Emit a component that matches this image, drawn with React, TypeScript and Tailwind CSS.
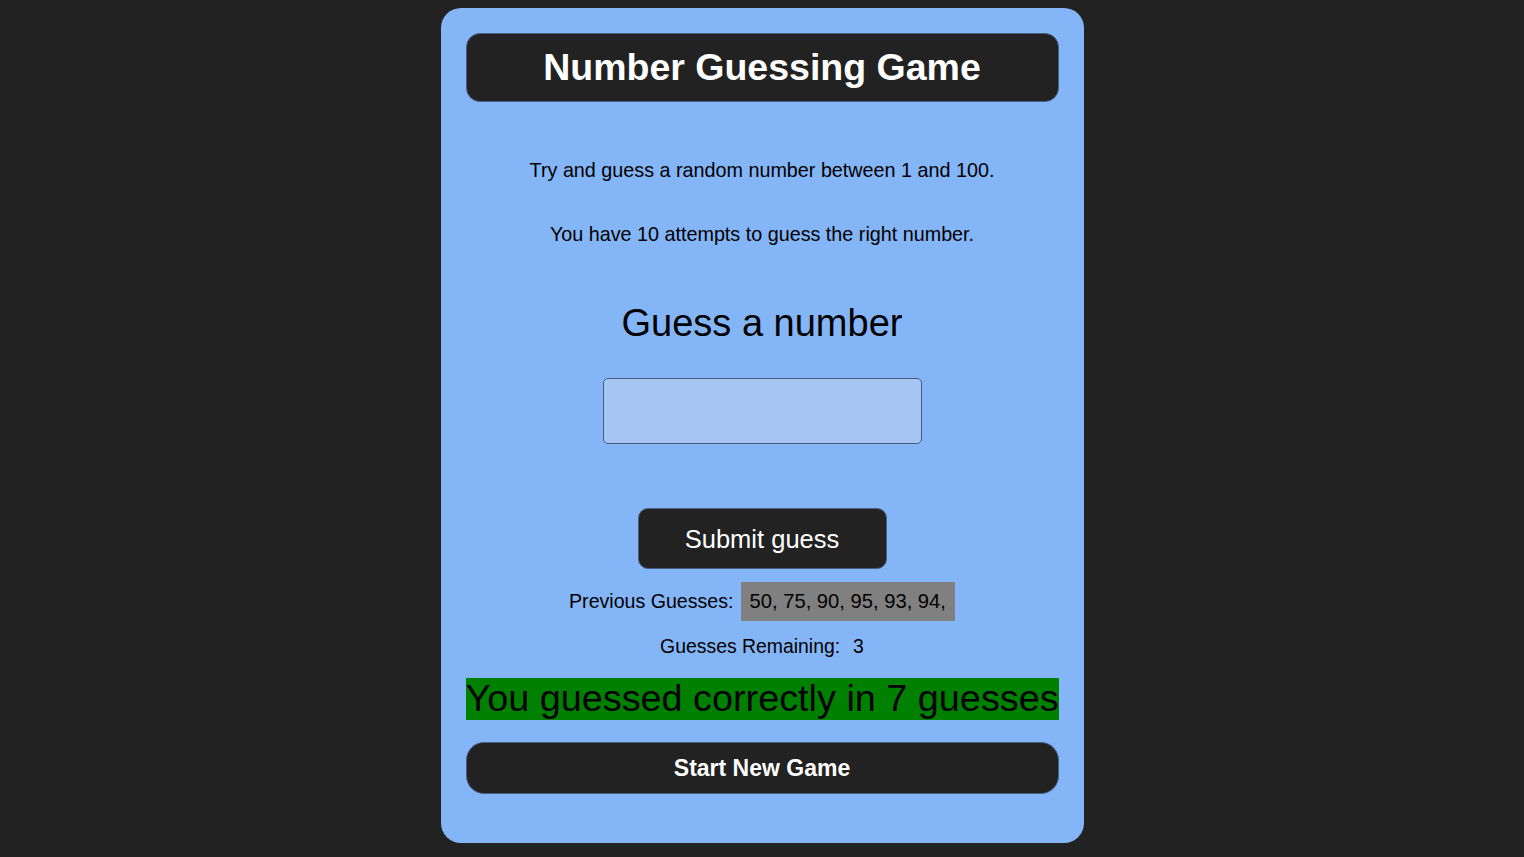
import React from 'react';

const guesses = [50, 75, 90, 95, 93, 94];

export default function App() {
  return (
    <div className="min-h-screen bg-[#222222] pt-[8px] font-['Liberation_Sans',Arial,sans-serif]">
      <div className="mx-auto w-[643px] rounded-[20px] bg-[#84b5f6] px-[25px] pt-[25px] pb-[49px] text-center text-black">
        {/* Header */}
        <div className="flex h-[69px] items-center justify-center rounded-[14px] bg-[#222222] border border-[#4a5f80]">
          <h1 className="text-[37.5px] font-bold text-white leading-none">Number Guessing Game</h1>
        </div>

        {/* Intro */}
        <p className="mt-[56px] h-[24px] text-[19.75px] leading-[24px]">
          Try and guess a random number between 1 and 100.
        </p>
        <p className="mt-[40px] h-[24px] text-[19.75px] leading-[24px]">
          You have 10 attempts to guess the right number.
        </p>

        {/* Guess input */}
        <h2 className="mt-[56px] h-[42px] text-[38px] leading-[42px]">Guess a number</h2>
        <div className="mt-[34px] flex justify-center">
          <input
            type="number"
            className="h-[66px] w-[319px] rounded-[5px] border border-[#4a5a78] bg-[#a5c6f3] outline-none"
          />
        </div>
        <div className="mt-[64px] flex justify-center">
          <button className="h-[61px] w-[249px] rounded-[10px] border border-[#4a5f80] bg-[#222222] pt-[2px] text-[25.5px] text-white">
            Submit guess
          </button>
        </div>

        {/* Results */}
        <div className="mt-[13px] flex h-[39px] items-center justify-center text-[19.6px]">
          <span className="mr-[7px]">Previous Guesses:</span>
          <span className="flex h-[39px] items-center bg-[#808080] px-[9px] text-[20.2px]">
            {guesses.map((g) => `${g}, `).join('')}
          </span>
        </div>
        <div className="mt-[13px] h-[24px] text-[19.4px] leading-[24px]">
          Guesses Remaining:<span className="ml-[13px]">3</span>
        </div>
        <div className="mt-[20px] flex h-[42px] items-center justify-center overflow-hidden bg-[#008000] text-[37.8px] leading-none whitespace-nowrap">
          You guessed correctly in 7 guesses
        </div>
        <button className="mt-[22px] h-[52px] w-full rounded-[18px] border border-[#4a5f80] bg-[#222222] text-[23px] font-bold text-white">
          Start New Game
        </button>
      </div>
    </div>
  );
}
